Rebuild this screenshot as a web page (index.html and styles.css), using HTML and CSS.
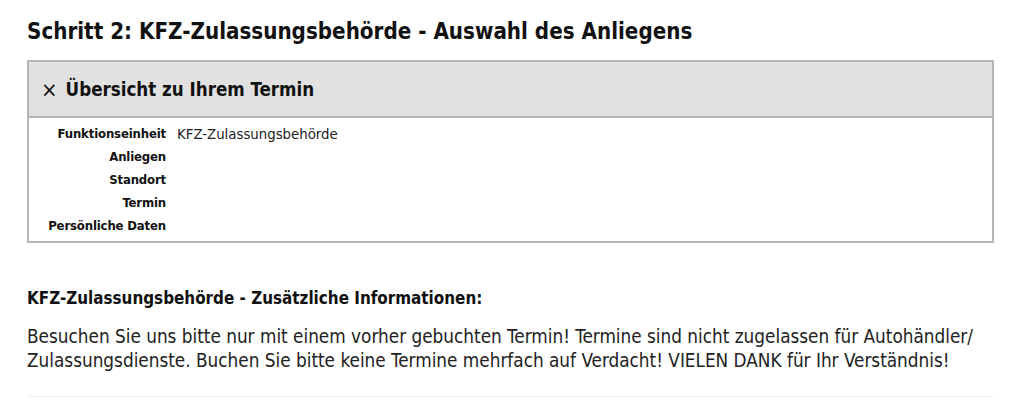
FILE: index.html
```html
<!DOCTYPE html>
<html lang="de">

<head>
  <meta charset="UTF-8">
  <meta name="viewport" content="width=device-width, initial-scale=1.0">
  <title>Terminvereinbarung</title>
  <link rel="stylesheet" href="styles.css">
</head>

<body>
  <div class="page">
    <h1 class="step-title">Schritt 2: KFZ-Zulassungsbehörde - Auswahl des Anliegens</h1>

    <div class="overview">
      <div class="overview-head">
        <span class="toggle">&times;</span>
        <span>Übersicht zu Ihrem Termin</span>
      </div>
      <dl class="overview-list">
        <dt>Funktionseinheit</dt>
        <dd>KFZ-Zulassungsbehörde</dd>
        <dt>Anliegen</dt>
        <dd></dd>
        <dt>Standort</dt>
        <dd></dd>
        <dt>Termin</dt>
        <dd></dd>
        <dt>Persönliche Daten</dt>
        <dd></dd>
      </dl>
    </div>

    <div class="info">
      <h2 class="info-title">KFZ-Zulassungsbehörde - Zusätzliche Informationen:</h2>
      <p class="info-text">Besuchen Sie uns bitte nur mit einem vorher gebuchten Termin! Termine sind nicht zugelassen für Autohändler/ Zulassungsdienste. Buchen Sie bitte keine Termine mehrfach auf Verdacht! VIELEN DANK für Ihr Verständnis!</p>
    </div>
  </div>
</body>

</html>
```

FILE: styles.css
```css
body {
  margin: 0;
  background: #fff;
  color: #111;
  font-family: "DejaVu Sans Condensed", "DejaVu Sans", sans-serif;
}
.page {
  width: 967px;
  padding: 0 30px 0 27px;
}
.step-title {
  margin: 0 0 15px;
  padding-top: 17px;
  font-size: 22.2px;
  font-weight: bold;
  line-height: 28px;
}
.overview {
  border: 2px solid #b5b5b5;
}
.overview-head {
  display: flex;
  align-items: center;
  gap: 8px;
  height: 54px;
  padding-left: 12px;
  background: #e1e1e1;
  border-bottom: 2px solid #b5b5b5;
  font-size: 18.6px;
  font-weight: bold;
}
.toggle {
  font-size: 22px;
  font-weight: normal;
}
.overview-list {
  display: grid;
  grid-template-columns: 137px 1fr;
  column-gap: 11px;
  margin: 0;
  padding: 4px 0;
  font-size: 13px;
  line-height: 23px;
}
.overview-list dt {
  text-align: right;
  font-weight: bold;
  letter-spacing: -0.15px;
}
.overview-list dd {
  margin: 0;
  font-size: 14.8px;
  color: #222;
}
.info {
  margin-top: 43px;
  padding-bottom: 23px;
  border-bottom: 1px solid #eee;
}
.info-title {
  margin: 0 0 15px;
  font-size: 16.9px;
  font-weight: bold;
  line-height: 24px;
}
.info-text {
  margin: 0;
  font-size: 18.8px;
  line-height: 24px;
  color: #222;
}
```
